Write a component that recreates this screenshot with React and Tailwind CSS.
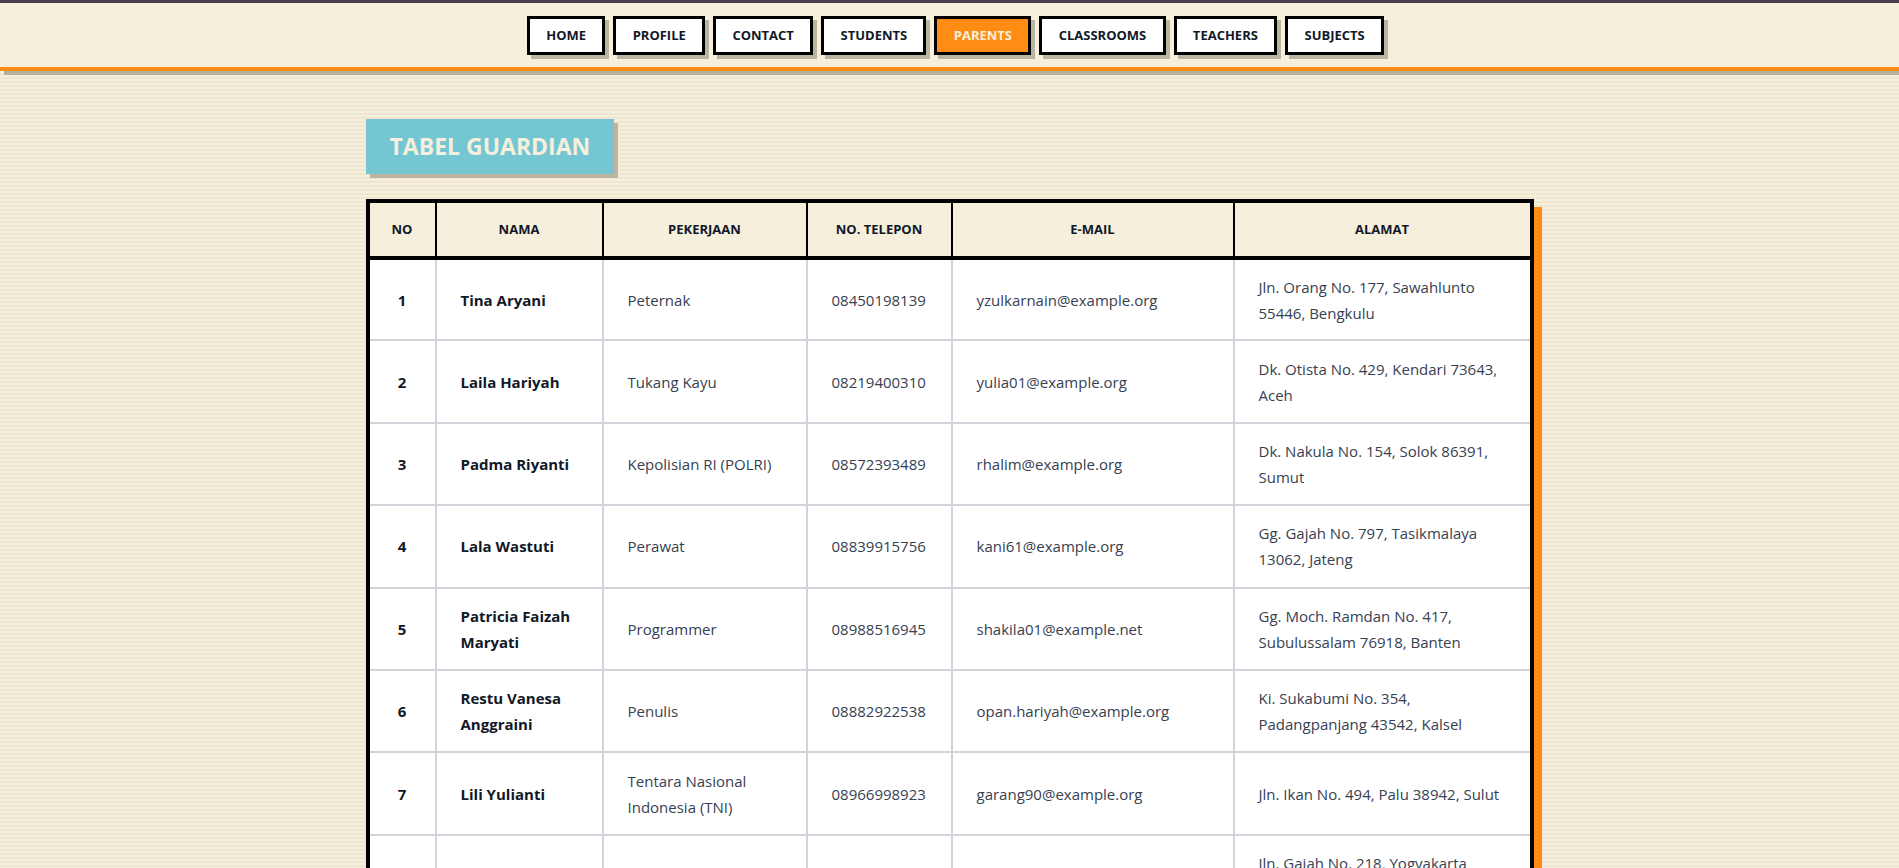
import React from 'react'

const menu = ['HOME', 'PROFILE', 'CONTACT', 'STUDENTS', 'PARENTS', 'CLASSROOMS', 'TEACHERS', 'SUBJECTS']

const guardians = [
  { no: 1, nama: 'Tina Aryani', pekerjaan: 'Peternak', telp: '08450198139', email: 'yzulkarnain@example.org', alamat: 'Jln. Orang No. 177, Sawahlunto 55446, Bengkulu' },
  { no: 2, nama: 'Laila Hariyah', pekerjaan: 'Tukang Kayu', telp: '08219400310', email: 'yulia01@example.org', alamat: 'Dk. Otista No. 429, Kendari 73643, Aceh' },
  { no: 3, nama: 'Padma Riyanti', pekerjaan: 'Kepolisian RI (POLRI)', telp: '08572393489', email: 'rhalim@example.org', alamat: 'Dk. Nakula No. 154, Solok 86391, Sumut' },
  { no: 4, nama: 'Lala Wastuti', pekerjaan: 'Perawat', telp: '08839915756', email: 'kani61@example.org', alamat: 'Gg. Gajah No. 797, Tasikmalaya 13062, Jateng' },
  { no: 5, nama: 'Patricia Faizah Maryati', pekerjaan: 'Programmer', telp: '08988516945', email: 'shakila01@example.net', alamat: 'Gg. Moch. Ramdan No. 417, Subulussalam 76918, Banten' },
  { no: 6, nama: 'Restu Vanesa Anggraini', pekerjaan: 'Penulis', telp: '08882922538', email: 'opan.hariyah@example.org', alamat: 'Ki. Sukabumi No. 354, Padangpanjang 43542, Kalsel' },
  { no: 7, nama: 'Lili Yulianti', pekerjaan: 'Tentara Nasional Indonesia (TNI)', telp: '08966998923', email: 'garang90@example.org', alamat: 'Jln. Ikan No. 494, Palu 38942, Sulut' },
  { no: 8, nama: 'Paris Purwanti', pekerjaan: 'Pedagang', telp: '08124587301', email: 'rika.wijaya@example.com', alamat: 'Jln. Gajah No. 218, Yogyakarta 20715, Papua' },
  { no: 9, nama: 'Yuni Nasyidah', pekerjaan: 'Dokter', telp: '08537120946', email: 'hasanah.umi@example.net', alamat: 'Ds. Merdeka No. 62, Bogor 18430, Jabar' },
]

const headers = ['NO', 'NAMA', 'PEKERJAAN', 'NO. TELEPON', 'E-MAIL', 'ALAMAT']

export default function App() {
  return (
    <div
      className="min-h-screen bg-[repeating-linear-gradient(0deg,#f5efdc_0px,#f5efdc_2px,#eee6d0_2px,#eee6d0_4px)] font-['Open_Sans',sans-serif] text-[#111827]"
    >
      <div className="h-[3px] bg-[#4a3b4e]" />
      <nav className="flex h-[68px] items-center justify-center gap-2 border-b-4 border-[#ff8c14] bg-[#f5efdc] pl-3 shadow-[4px_4px_0_#b5b0a0]">
        {menu.map((item) => (
          <a
            key={item}
            href="#"
            className={
              item === 'PARENTS'
                ? 'border-[3px] border-black bg-[#ff8c14] px-[16.3px] py-[7px] text-[13px] font-bold leading-[19px] text-[#f5efdc] shadow-[4px_4px_0_#bab5a3]'
                : 'border-[3px] border-black bg-white px-[16.3px] py-[7px] text-[13px] font-bold leading-[19px] text-[#111827] shadow-[4px_4px_0_#bab5a3]'
            }
          >
            {item}
          </a>
        ))}
      </nav>

      <main className="mx-auto w-[1168px] pt-[48px] pb-10">
        <h1 className="inline-block bg-[#74c7d2] px-6 py-3 text-[23px] font-bold leading-[31px] text-[#f5efdc] shadow-[4px_4px_0_#bdb5a0]">
          TABEL GUARDIAN
        </h1>

        <div className="mt-[25px] border-4 border-black bg-white shadow-[8px_8px_0_#ff8c14]">
          <table className="w-full table-fixed border-collapse">
            <colgroup>
              <col className="w-[66px]" />
              <col className="w-[167px]" />
              <col className="w-[204px]" />
              <col className="w-[145px]" />
              <col className="w-[282px]" />
              <col />
            </colgroup>
            <thead>
              <tr className="h-[55px] bg-[#f5efdc]">
                {headers.map((h, i) => (
                  <th
                    key={h}
                    className={
                      i === 0
                        ? 'border-b-4 border-black text-center text-[13px] font-bold'
                        : 'border-b-4 border-l-2 border-black text-center text-[13px] font-bold'
                    }
                  >
                    {h}
                  </th>
                ))}
              </tr>
            </thead>
            <tbody>
              {guardians.map((g) => (
                <tr key={g.no} className="h-[82.4px] border-b-2 border-[#d1d5db] text-[15px] leading-[26px]">
                  <td className="text-center font-bold text-[#111827]">{g.no}</td>
                  <td className="border-l-2 border-[#d1d5db] px-6 font-bold text-[#111827]">{g.nama}</td>
                  <td className="border-l-2 border-[#d1d5db] px-6 text-[#374151]">{g.pekerjaan}</td>
                  <td className="border-l-2 border-[#d1d5db] px-6 text-[#374151]">{g.telp}</td>
                  <td className="border-l-2 border-[#d1d5db] px-6 text-[#374151]">{g.email}</td>
                  <td className="border-l-2 border-[#d1d5db] px-6 text-[#374151]">{g.alamat}</td>
                </tr>
              ))}
            </tbody>
          </table>
        </div>
      </main>
    </div>
  )
}
